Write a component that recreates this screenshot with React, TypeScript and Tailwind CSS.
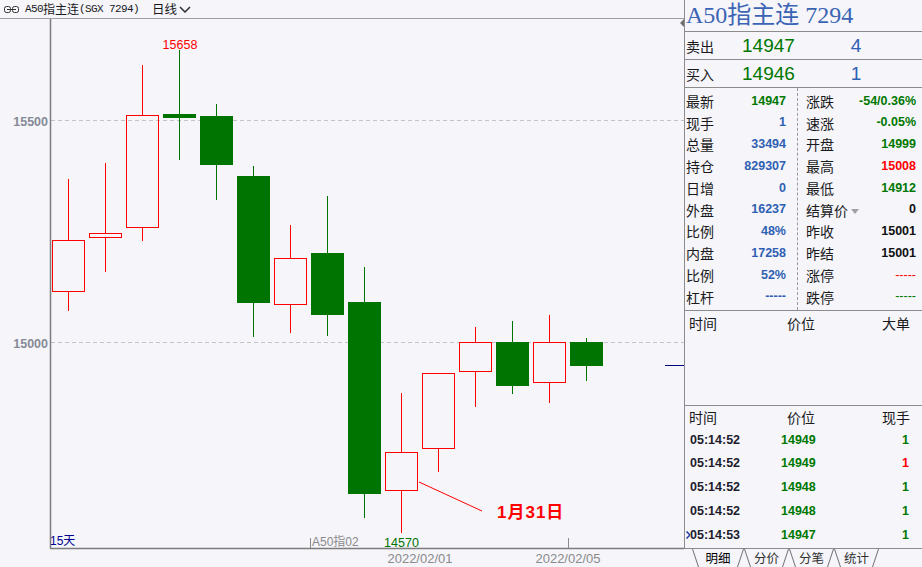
import React from 'react';

type Candle = [number, number, number, number]; // open, high, low, close

const candles: Candle[] = [
  [15114, 15367, 15070, 15229],
  [15236, 15403, 15158, 15245],
  [15258, 15624, 15228, 15511],
  [15514, 15658, 15410, 15505],
  [15509, 15536, 15320, 15399],
  [15374, 15396, 15012, 15088],
  [15086, 15264, 15020, 15189],
  [15200, 15329, 15014, 15061],
  [15090, 15169, 14604, 14658],
  [14666, 14885, 14570, 14752],
  [14761, 14930, 14708, 14930],
  [14934, 15034, 14854, 14999],
  [15000, 15047, 14883, 14901],
  [14911, 15061, 14863, 14999],
  [14999, 15008, 14912, 14947],
];

const py = (p: number) => 342 - (p - 15000) * 0.444;

const G = 'text-[#007800]';
const B = 'text-[#2f5fb3]';
const R = 'text-[#ff0000]';
const K = 'text-[#101010]';

const stats: [string, string, string, string, string, string][] = [
  ['最新', '14947', G, '涨跌', '-54/0.36%', G],
  ['现手', '1', B, '速涨', '-0.05%', G],
  ['总量', '33494', B, '开盘', '14999', G],
  ['持仓', '829307', B, '最高', '15008', R],
  ['日增', '0', B, '最低', '14912', G],
  ['外盘', '16237', B, '结算价', '0', K],
  ['比例', '48%', B, '昨收', '15001', K],
  ['内盘', '17258', B, '昨结', '15001', K],
  ['比例', '52%', B, '涨停', '-----', R],
  ['杠杆', '-----', B, '跌停', '-----', G],
];

const trades = [
  { t: '05:14:52', p: '14949', v: '1', vc: G },
  { t: '05:14:52', p: '14949', v: '1', vc: R },
  { t: '05:14:52', p: '14948', v: '1', vc: G },
  { t: '05:14:52', p: '14948', v: '1', vc: G },
  { t: '05:14:53', p: '14947', v: '1', vc: G, cur: true },
];

const tabs = ['明细', '分价', '分笔', '统计'];

const cjk = "font-['Noto_Sans_CJK_SC',sans-serif]";
const num = "font-['Liberation_Sans','Noto_Sans_CJK_SC',sans-serif]";
const mono = "font-['Liberation_Mono',monospace] text-[11px] tracking-[-0.6px]";

function Chart() {
  return (
    <svg width={684} height={548} viewBox="0 19 684 548" className="block">
      <polygon points="684,19 680,23 684,27" fill="#707070" />
      {[120.5, 342.5].map((y) => (
        <line key={y} x1={51} y1={y} x2={684} y2={y} stroke="#c4c4c8" strokeDasharray="4 3" />
      ))}
      <text x={48} y={126} textAnchor="end" className={`${num} text-[12.5px] font-bold fill-[#868a96]`}>15500</text>
      <text x={48} y={348} textAnchor="end" className={`${num} text-[12.5px] font-bold fill-[#868a96]`}>15000</text>

      {candles.map(([o, h, l, c], i) => {
        const cx = 68.5 + 37 * i;
        const top = Math.round(py(Math.max(o, c)));
        const bot = Math.round(py(Math.min(o, c)));
        const hy = Math.round(py(h));
        const ly = Math.round(py(l));
        if (c >= o && i !== 3) {
          return (
            <g key={i} stroke="#ff0000" fill="none" shapeRendering="crispEdges">
              {hy < top && <line x1={cx} y1={hy} x2={cx} y2={top} />}
              <line x1={cx} y1={bot} x2={cx} y2={ly} />
              <rect x={cx - 16} y={top + 0.5} width={32} height={Math.max(bot - top, 3)} />
            </g>
          );
        }
        return (
          <g key={i} shapeRendering="crispEdges">
            <line x1={cx} y1={hy} x2={cx} y2={ly} stroke="#007400" />
            <rect x={cx - 16.5} y={top} width={33} height={Math.max(bot - top, 4)} fill="#007400" />
          </g>
        );
      })}

      <text x={180} y={48.5} textAnchor="middle" className={`${num} text-[12.5px] fill-[#ff0000]`}>15658</text>
      <text x={401.5} y={546.5} textAnchor="middle" className={`${num} text-[12.5px] fill-[#007400]`}>14570</text>

      <line x1={419} y1={482} x2={482} y2={511} stroke="#ff0000" strokeWidth={1} />
      <text x={497} y={518} letterSpacing={1} className={`${num} text-[17px] font-bold fill-[#ff0000]`}>1月31日</text>

      <line x1={665} y1={365.5} x2={684} y2={365.5} stroke="#000080" />

      <line x1={50.5} y1={19} x2={50.5} y2={548.5} stroke="#7c7c7c" strokeWidth={1.5} />
      <line x1={50} y1={548.5} x2={684} y2={548.5} stroke="#7c7c7c" strokeWidth={1.5} />
      <line x1={310.5} y1={538} x2={310.5} y2={548} stroke="#8a8a8a" />
      <line x1={568.5} y1={538} x2={568.5} y2={548} stroke="#8a8a8a" />

      <text x={50} y={545} className={`${num} text-[12px] fill-[#000090]`}>15天</text>
      <text x={312} y={546} className={`${num} text-[12px] fill-[#8a8a8a]`}>A50指02</text>
      <text x={420} y={563} textAnchor="middle" className={`${num} text-[13px] fill-[#8a8a8a]`}>2022/02/01</text>
      <text x={568} y={563} textAnchor="middle" className={`${num} text-[13px] fill-[#8a8a8a]`}>2022/02/05</text>
    </svg>
  );
}

function Tab({ label, active, wide }: { label: string; active?: boolean; wide?: boolean }) {
  return (
    <div className={`flex h-[18px] ${wide ? 'w-[52px]' : 'w-[45px]'}`}>
      <svg width={7} height={18} className="shrink-0">
        <line x1={0.5} y1={0} x2={6.5} y2={18} stroke="#707070" />
      </svg>
      <div className={`flex-1 flex items-center justify-center text-[12.5px] leading-none ${cjk} ${active ? 'text-black' : 'text-[#303030]'}`}>
        {label}
      </div>
      <svg width={7} height={18} className="shrink-0">
        <line x1={0.5} y1={18} x2={6.5} y2={0} stroke="#707070" />
      </svg>
    </div>
  );
}

function SidePanel() {
  return (
    <div className="w-[238px] flex flex-col">
      <div className="h-[549px] border-l border-b border-[#8c8c8c] flex flex-col">
        <div className="h-[32px] border-b border-[#8c8c8c] flex items-center pl-[1px] pb-[1px]">
          <span className={`text-[24px] leading-none text-[#3c64b4] font-['Liberation_Serif','Noto_Sans_CJK_SC',serif]`}>
            A50指主连 7294
          </span>
        </div>
        {[
          ['卖出', '14947', '4'],
          ['买入', '14946', '1'],
        ].map(([l, p, q]) => (
          <div key={l} className="h-[28px] border-b border-[#8c8c8c] flex items-center pl-[1px]">
            <span className={`w-[56px] text-[14px] leading-none text-[#1a1a1a] ${cjk}`}>{l}</span>
            <span className={`w-[108px] text-[19px] leading-none ${num} text-[#007800]`}>{p}</span>
            <span className={`w-[12px] text-center text-[19px] leading-none ${num} text-[#2f5fb3]`}>{q}</span>
          </div>
        ))}
        <div className="h-[223px] border-b border-[#8c8c8c] flex">
          <div className="w-[112px] flex flex-col pt-[2px]">
            {stats.map(([l, v, c], i) => (
              <div key={i} className="h-[21.75px] flex items-center justify-between pl-[1px] pr-[11px]">
                <span className={`text-[14px] leading-none text-[#1a1a1a] ${cjk}`}>{l}</span>
                <span className={`text-[12.5px] leading-none font-bold ${num} ${c}`}>{v}</span>
              </div>
            ))}
          </div>
          <div className="flex-1 border-l border-dashed border-[#9a9a9a] flex flex-col pt-[2px]">
            {stats.map(([, , , l, v, c], i) => (
              <div key={i} className="h-[21.75px] flex items-center justify-between pl-[8px] pr-[6px]">
                <span className={`flex items-center text-[14px] leading-none text-[#1a1a1a] ${cjk}`}>
                  {l}
                  {l === '结算价' && (
                    <svg width={8} height={5} className="ml-[3px] mt-[3px]">
                      <polygon points="0,0 8,0 4,5" fill="#a0a0a0" />
                    </svg>
                  )}
                </span>
                <span className={`text-[12.5px] leading-none ${v === '-----' ? 'font-normal' : 'font-bold'} ${num} ${c}`}>{v}</span>
              </div>
            ))}
          </div>
        </div>
        <div className="h-[95px] border-b border-[#8c8c8c]">
          <div className={`h-[23px] flex items-center pl-[4px] text-[14px] leading-none text-[#1a1a1a] ${cjk}`}>
            <span className="w-[98px]">时间</span>
            <span className="w-[95px]">价位</span>
            <span>大单</span>
          </div>
        </div>
        <div className="flex-1 flex flex-col">
          <div className={`h-[22px] flex items-center pl-[4px] text-[14px] leading-none text-[#1a1a1a] ${cjk}`}>
            <span className="w-[98px]">时间</span>
            <span className="w-[95px]">价位</span>
            <span>现手</span>
          </div>
          {trades.map((r, i) => (
            <div key={i} className={`h-[23.75px] flex items-center pl-[1px] pr-[13px] text-[12.5px] leading-none font-bold ${num}`}>
              <span className="w-[4px] flex items-center">
                {r.cur && (
                  <svg width={5} height={8}>
                    <polyline points="0.5,0.5 4,4 0.5,7.5" fill="none" stroke="#1a3aa0" strokeWidth={1.5} />
                  </svg>
                )}
              </span>
              <span className="w-[91px] text-[#1c1c2c]">{r.t}</span>
              <span className="flex-1 text-[#007800]">{r.p}</span>
              <span className={r.vc}>{r.v}</span>
            </div>
          ))}
        </div>
      </div>
      <div className="h-[18px] flex pl-[8px]">
        {tabs.map((t, i) => (
          <Tab key={t} label={t} active={i === 0} wide={i === 0} />
        ))}
      </div>
    </div>
  );
}

export default function App() {
  return (
    <div className="w-[922px] h-[567px] bg-[#f5f5fa] flex overflow-hidden">
      <div className="w-[684px] flex flex-col">
        <div className="h-[19px] border-b border-[#a0a0a0] flex items-center pl-[4px] text-[#1a1a1a]">
          <svg width={15} height={7} className="shrink-0">
            <rect x={0.5} y={0.5} width={6} height={6} rx={2} fill="none" stroke="#303030" />
            <rect x={8.5} y={0.5} width={6} height={6} rx={2} fill="none" stroke="#303030" />
            <line x1={3} y1={3.5} x2={12} y2={3.5} stroke="#303030" />
          </svg>
          <span className="ml-[6px] flex items-center leading-none">
            <span className={mono}>A50</span>
            <span className={`text-[12px] ${cjk}`}>指主连</span>
            <span className={mono}>(SGX 7294)</span>
          </span>
          <span className={`ml-[13px] text-[12.5px] leading-none ${cjk}`}>日线</span>
          <svg width={12} height={7} className="ml-[2px]">
            <polyline points="1,1 6,6 11,1" fill="none" stroke="#303030" strokeWidth={1.5} />
          </svg>
        </div>
        <Chart />
      </div>
      <SidePanel />
    </div>
  );
}
